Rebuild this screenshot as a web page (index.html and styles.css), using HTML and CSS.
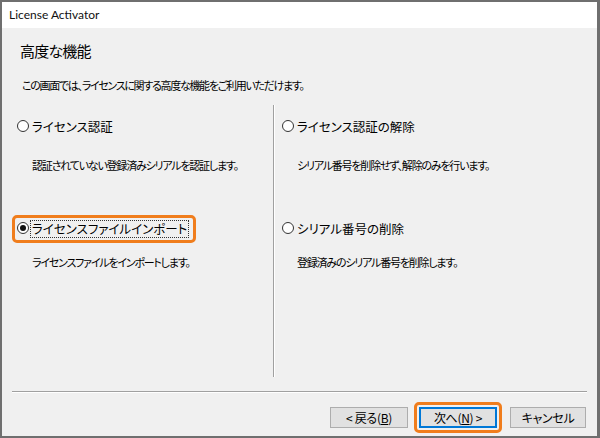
FILE: index.html
```html
<!DOCTYPE html>
<html lang="ja">
<head>
    <meta charset="UTF-8">
    <meta name="viewport" content="width=device-width, initial-scale=1.0">
    <title>License Activator</title>
    <link rel="stylesheet" href="styles.css">
</head>
<body>
    <div class="window">
        <div class="titlebar">License Activator</div>
        <div class="content">
            <h1 class="heading">高度な機能</h1>
            <p class="intro">この画面では、ライセンスに関する高度な機能をご利用いただけます。</p>

            <div class="options">
                <div class="col col-left">
                    <label class="option first">
                        <span class="radio"></span>
                        <span class="option-text">ライセンス認証</span>
                    </label>
                    <p class="option-desc first">認証されていない登録済みシリアルを認証します。</p>

                    <label class="option second highlight">
                        <span class="radio checked"></span>
                        <span class="option-text focused">ライセンスファイルインポート</span>
                    </label>
                    <p class="option-desc second">ライセンスファイルをインポートします。</p>
                </div>
                <div class="divider"></div>
                <div class="col col-right">
                    <label class="option first">
                        <span class="radio"></span>
                        <span class="option-text">ライセンス認証の解除</span>
                    </label>
                    <p class="option-desc first">シリアル番号を削除せず、解除のみを行います。</p>

                    <label class="option second">
                        <span class="radio"></span>
                        <span class="option-text">シリアル番号の削除</span>
                    </label>
                    <p class="option-desc second">登録済みのシリアル番号を削除します。</p>
                </div>
            </div>

            <div class="separator"></div>

            <div class="buttons">
                <button class="btn btn-back">&lt; 戻る(<u>B</u>)</button>
                <div class="btn-wrap">
                    <button class="btn btn-default">次へ(<u>N</u>) &gt;</button>
                </div>
                <button class="btn btn-cancel">キャンセル</button>
            </div>
        </div>
    </div>
</body>
</html>
```

FILE: styles.css
```css
* {
    box-sizing: border-box;
}
html, body {
    margin: 0;
    padding: 0;
}
body {
    font-family: Lato, "Noto Sans CJK JP", sans-serif;
    font-size: 12px;
    color: #000;
    background: #f0f0f0;
    width: 600px;
    height: 438px;
    overflow: hidden;
}
.window {
    width: 600px;
    height: 438px;
    border: 2px solid #6f6f6f;
    border-right-width: 3px;
    background: #f0f0f0;
    display: flex;
    flex-direction: column;
}
.titlebar {
    height: 26px;
    line-height: 26px;
    padding-left: 7px;
    background: #fff;
    font-size: 12px;
    color: #111;
}
.content {
    flex: 1;
    padding: 0 10px;
    display: flex;
    flex-direction: column;
    font-family: "Noto Sans CJK JP", sans-serif;
    font-feature-settings: "palt";
}
.heading {
    margin: 13px 0 0 8px;
    font-size: 15px;
    font-weight: normal;
    line-height: 20px;
    letter-spacing: -0.8px;
}
.intro {
    margin: 16px 0 0 10px;
    line-height: 16px;
    font-size: 11px;
    letter-spacing: -1.3px;
}
.options {
    margin-top: 12px;
    height: 272px;
    display: flex;
}
.col {
    padding-top: 8px;
    display: flex;
    flex-direction: column;
    align-items: flex-start;
}
.col-left {
    width: 261px;
}
.col-right {
    flex: 1;
    padding-left: 2px;
}
.divider {
    width: 2px;
    border-left: 1px solid #a0a0a0;
    border-right: 1px solid #fff;
}
.option {
    height: 28px;
    display: inline-flex;
    align-items: center;
    padding: 0 4px 0 2px;
    border: 3px solid transparent;
    border-radius: 5px;
    font-size: 12.5px;
}
.option.second {
    margin-top: 42px;
}
.option.highlight {
    border-color: #f07d1c;
}
.radio {
    width: 12px;
    height: 12px;
    border: 1px solid #333;
    border-radius: 50%;
    background: #fff;
    display: inline-flex;
    align-items: center;
    justify-content: center;
    margin-top: -2px;
}
.radio.checked::after {
    content: "";
    width: 6px;
    height: 6px;
    border-radius: 50%;
    background: #111;
}
.option-text {
    margin-left: 1px;
    padding: 0 1px;
    line-height: 16px;
    border: 1px dotted transparent;
}
.option-text.focused {
    border-color: #333;
}
.option-desc {
    margin: 16px 0 0 20px;
    line-height: 16px;
    font-size: 11px;
    letter-spacing: -1.2px;
    white-space: nowrap;
}
.option-desc.second {
    margin-top: 11px;
}
.separator {
    margin-top: 14px;
    height: 2px;
    border-top: 1px solid #a0a0a0;
    border-bottom: 1px solid #fff;
}
.buttons {
    margin-top: 9px;
    display: flex;
    justify-content: flex-end;
    align-items: center;
    padding-right: 1px;
}
.btn {
    font-family: "Noto Sans CJK JP", sans-serif;
    font-size: 12px;
    font-feature-settings: "palt";
    letter-spacing: -0.3px;
    width: 78px;
    height: 21px;
    padding: 0;
    background: #e1e1e1;
    border: 1px solid #adadad;
    color: #000;
}
.btn u {
    text-decoration: underline;
}
.btn-back {
    margin-right: 6px;
}
.btn-wrap {
    border: 3px solid #f07d1c;
    border-radius: 5px;
    padding: 2px;
}
.btn-default {
    border-color: #0078d7;
    box-shadow: inset 0 0 0 1px #0078d7;
}
.btn-cancel {
    margin-left: 8px;
    width: 76px;
}
```
